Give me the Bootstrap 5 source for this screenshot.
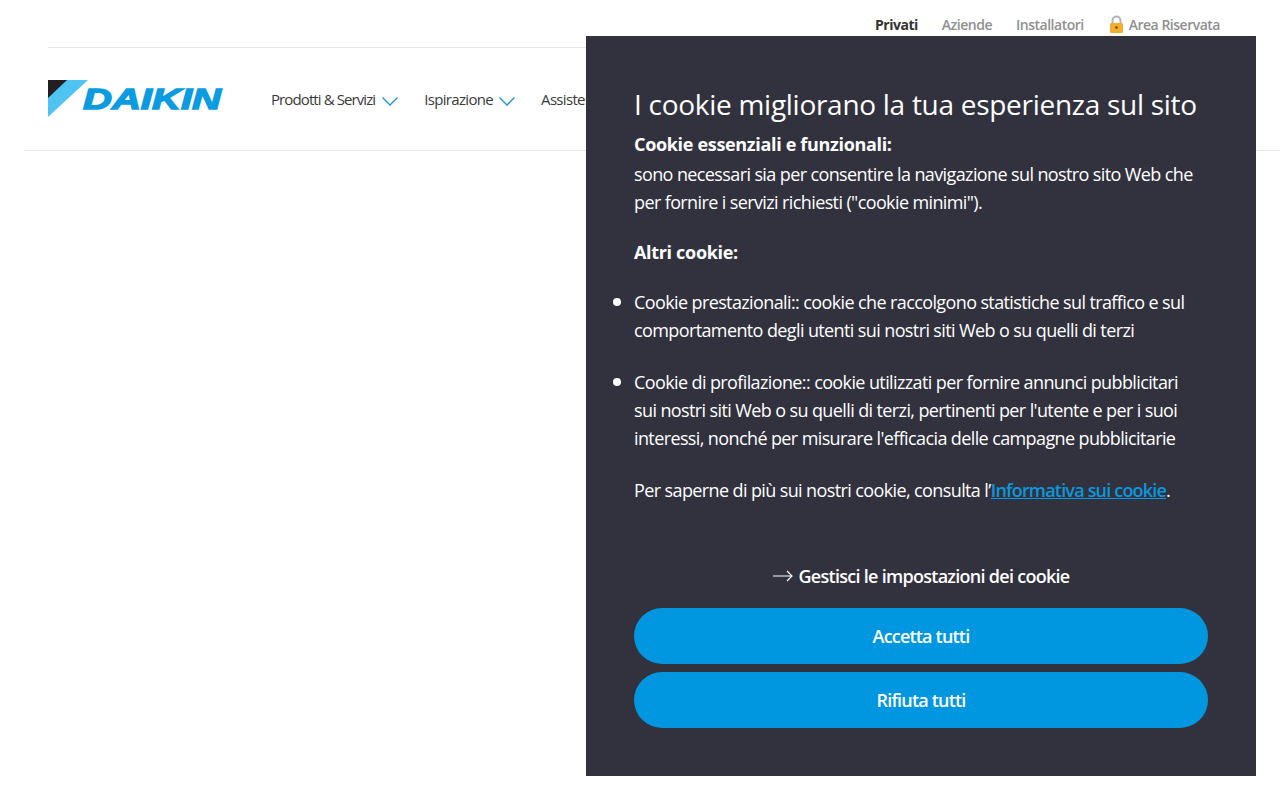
<!DOCTYPE html>
<html lang="it">
<head>
<meta charset="utf-8">
<title>Daikin</title>
<link href="https://cdn.jsdelivr.net/npm/bootstrap@5.3.0/dist/css/bootstrap.min.css" rel="stylesheet">
<style>
html,body{height:800px;overflow:hidden;background:#fff}
body{font-family:"Open Sans","Noto Sans",sans-serif;position:relative}
.top-strip{margin:0 24px 0 48px;height:48px;border-bottom:1px solid #e6e6e6;padding-right:36px;padding-top:15px;font-size:14px;line-height:19px;font-weight:600;letter-spacing:-.035em;gap:24px;color:#8f8f8f}
.top-strip .on{color:#333;font-weight:700}
.main-strip{margin-left:24px;height:103px;padding-top:32px;border-bottom:1px solid #e6e6e6}
.logo-box{width:175px;height:37px;position:relative;flex:none;margin:0 48px 0 24px}
.logo-word{position:absolute;left:35px;top:-1px;font:italic 700 30px/40px "Liberation Sans",sans-serif;color:#0b9be0;-webkit-text-stroke:1.4px #0b9be0;transform:scaleX(1.335);transform-origin:left}
.main-item{font-size:15px;line-height:20px;letter-spacing:-.045em;color:#3a3a3a;margin:9px 26px 0 0;gap:6px;align-self:flex-start}
.main-item.tight{letter-spacing:-.06em;margin-right:26px;gap:6px}
.tight svg{margin-left:1px}
.cookie-panel{position:absolute;left:586px;top:36px;width:670px;height:740px;background:#32323e;color:#fff;padding:48px 48px 0;font-size:18px;line-height:28px;letter-spacing:-.034em}
.cookie-panel h2{font-size:28px;line-height:40px;font-weight:400;letter-spacing:-.01em;margin:0 0 6px;white-space:nowrap}
.cookie-panel p{margin:0 0 22px}
.cookie-panel strong{font-weight:700;letter-spacing:-.018em}
.lead-in{display:block;margin-bottom:2px}
.cookie-panel ul{padding:0 8px 0 0;margin:0;list-style:none}
.cookie-panel li{margin-bottom:24px;position:relative}
.cookie-panel li::before{content:"";position:absolute;left:-21px;top:10px;width:8px;height:8px;border-radius:50%;background:#fff}
.cookie-panel a{color:#0b97dd;font-weight:600;letter-spacing:-.045em}
.manage-row{font-weight:600;margin-top:58px;gap:6px;letter-spacing:-.04em}
.pill-btn{height:56px;width:574px;border-radius:28px;background:#0097e0;color:#fff;font-size:18px;font-weight:600;letter-spacing:-.045em;border:0}
.btn-stack{margin-top:18px;gap:8px}
</style>
</head>
<body>
<header>
<div class="top-strip d-flex justify-content-end align-items-start">
<span class="on">Privati</span><span>Aziende</span><span>Installatori</span>
<span class="d-flex align-items-center gap-1"><svg width="17" height="19" viewBox="0 0 17 19"><path d="M4.5 9V5.500a4 4 0 0 1 8 0V9" fill="none" stroke="#b0b4b8" stroke-width="2"/><rect x="2" y="8" width="13" height="10" rx="1.500" fill="#f2ae2a"/><circle cx="8.500" cy="12.500" r="1.300" fill="#6b4a10"/></svg>Area Riservata</span>
</div>
<div class="main-strip d-flex">
<div class="logo-box">
<svg class="position-absolute top-0 start-0" width="40" height="37" viewBox="0 0 40 37"><polygon points="0,0 40,0 0,37" fill="#4fc3f2"/><polygon points="0,0 19,0 0,18" fill="#231f20"/></svg>
<span class="logo-word">DAIKIN</span>
</div>
<div class="main-item tight d-flex align-items-center"><span>Prodotti &amp; Servizi</span><svg width="16" height="9" viewBox="0 0 16 9" class="mt-1"><path d="M.5.500l7.500 7.500 7.500-7.500" fill="none" stroke="#1496d2" stroke-width="1.300"/></svg></div>
<div class="main-item d-flex align-items-center"><span>Ispirazione</span><svg width="16" height="9" viewBox="0 0 16 9" class="mt-1"><path d="M.5.500l7.500 7.500 7.500-7.500" fill="none" stroke="#1496d2" stroke-width="1.300"/></svg></div>
<div class="main-item"><span>Assistenza</span></div>
</div>
</header>
<section class="cookie-panel">
<h2>I cookie migliorano la tua esperienza sul sito</h2>
<p><strong class="lead-in">Cookie essenziali e funzionali:</strong>sono necessari sia per consentire la navigazione sul nostro sito Web che per fornire i servizi richiesti ("cookie minimi").</p>
<p><strong>Altri cookie:</strong></p>
<ul>
<li>Cookie prestazionali:: cookie che raccolgono statistiche sul traffico e sul comportamento degli utenti sui nostri siti Web o su quelli di terzi</li>
<li>Cookie di profilazione:: cookie utilizzati per fornire annunci pubblicitari sui nostri siti Web o su quelli di terzi, pertinenti per l'utente e per i suoi interessi, nonché per misurare l'efficacia delle campagne pubblicitarie</li>
</ul>
<p>Per saperne di più sui nostri cookie, consulta l’<a href="#">Informativa sui cookie</a>.</p>
<div class="manage-row d-flex justify-content-center align-items-center"><svg width="20" height="12" viewBox="0 0 20 12"><path d="M0 6h19M14 1l5 5-5 5" fill="none" stroke="#fff" stroke-width="1.200"/></svg><span>Gestisci le impostazioni dei cookie</span></div>
<div class="btn-stack d-flex flex-column">
<button class="btn pill-btn" type="button">Accetta tutti</button>
<button class="btn pill-btn" type="button">Rifiuta tutti</button>
</div>
</section>
</body>
</html>
